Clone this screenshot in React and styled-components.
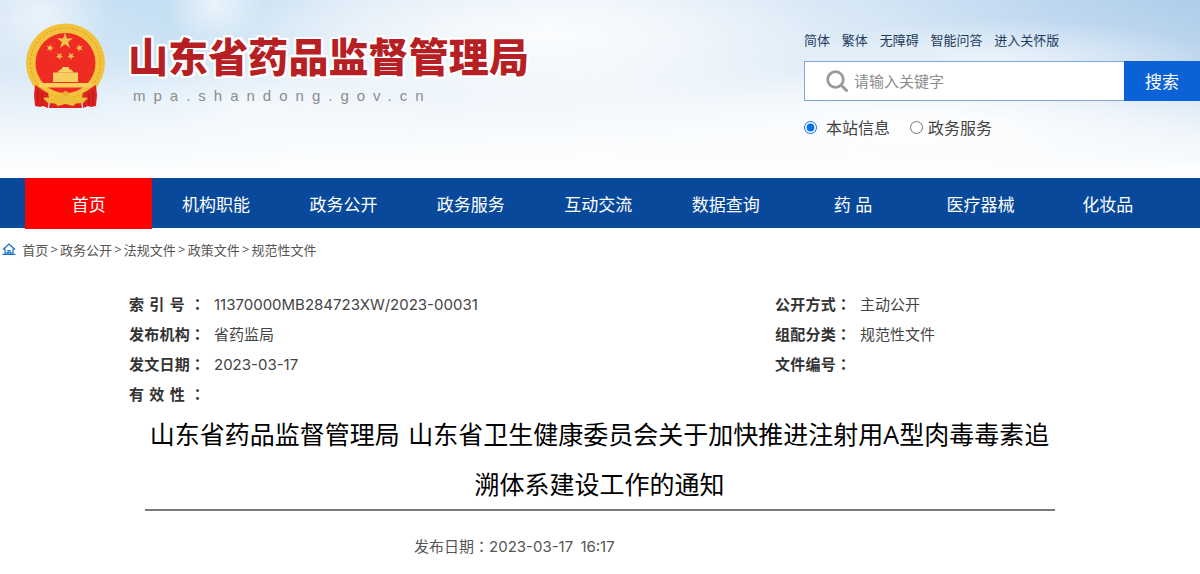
import React from 'react';
import styled, {createGlobalStyle} from 'styled-components';

const CJK = `"Open Sans", "Noto Sans CJK SC", sans-serif`;

const GlobalStyle = createGlobalStyle`
    html, body {
        margin: 0;
        padding: 0;
        background: #fff;
        font-family: ${CJK};
    }
`;

const Page = styled.div`
    width: 1200px;
    height: 574px;
    overflow: hidden;
`;

const Header = styled.header`
    height: 178px;
    display: flex;
    justify-content: space-between;
    background:
        radial-gradient(ellipse 70px 60px at 40px 15px, rgba(255,255,255,0.6), rgba(255,255,255,0) 100%),
        radial-gradient(ellipse 50px 40px at 215px 5px, rgba(255,255,255,0.6), rgba(255,255,255,0) 100%),
        radial-gradient(ellipse 340px 60px at 930px 125px, rgba(255,255,255,0.95), rgba(255,255,255,0) 100%),
        radial-gradient(ellipse 300px 75px at 540px 35px, rgba(255,255,255,0.85), rgba(255,255,255,0) 100%),
        radial-gradient(ellipse 220px 40px at 1000px 60px, rgba(255,255,255,0.6), rgba(255,255,255,0) 100%),
        radial-gradient(ellipse 200px 60px at 250px 110px, rgba(255,255,255,0.5), rgba(255,255,255,0) 100%),
        linear-gradient(to bottom, rgba(255,255,255,0) 0%, rgba(255,255,255,0.2) 35%, rgba(255,255,255,0.8) 78%, #fff 100%),
        linear-gradient(to right, #cfe3f4 0%, #c3def3 14%, #dbeaf6 30%, #e6f0f9 50%, #d5e6f5 72%, #bcd6ef 88%, #aecdea 100%);
`;

const Brand = styled.div`
    display: flex;
    align-items: flex-start;
    padding: 23px 0 0 25px;
`;

const Emblem = styled.svg`
    width: 82px;
    height: 86px;
    flex: none;
`;

const BrandText = styled.div`
    margin: 8px 0 0 21px;
`;

const SiteName = styled.div`
    font-family: "Noto Sans CJK SC", sans-serif;
    font-size: 40px;
    line-height: 48px;
    letter-spacing: 0.1px;
    font-weight: 900;
    color: #b61f24;
    white-space: nowrap;
    text-shadow: 2px 0 0 #fff, -2px 0 0 #fff, 0 2px 0 #fff, 0 -2px 0 #fff,
        2px 2px 0 #fff, -2px 2px 0 #fff, 2px -2px 0 #fff, -2px -2px 0 #fff;
`;

const SiteUrl = styled.div`
    margin: 8px 0 0 5px;
    font-family: "Liberation Sans", sans-serif;
    font-size: 15px;
    line-height: 18px;
    letter-spacing: 8px;
    color: #8a8c8e;
    white-space: nowrap;
`;

const Tools = styled.div`
    width: 396px;
    padding-top: 32px;
`;

const TopLinks = styled.div`
    display: flex;
    gap: 11.8px;
    font-size: 13px;
    line-height: 17px;
    color: #1f3b5c;
`;

const SearchBar = styled.div`
    display: flex;
    height: 40px;
    margin-top: 12px;
`;

const SearchField = styled.div`
    width: 320px;
    box-sizing: border-box;
    display: flex;
    align-items: center;
    gap: 6px;
    padding-left: 21px;
    background: #fff;
    border: 1px solid #7fa7dc;
    border-right: none;
    color: #8c8c8c;
    font-size: 15px;
`;

const Placeholder = styled.span`
    margin-bottom: 2px;
`;

const SearchButton = styled.div`
    flex: 1;
    display: flex;
    align-items: center;
    justify-content: center;
    padding-bottom: 2px;
    background: #0b62d6;
    color: #fff;
    font-size: 17px;
`;

const Scopes = styled.div`
    display: flex;
    align-items: center;
    margin-top: 16px;
    height: 20px;
    font-size: 16px;
    color: #444;
`;

const Scope = styled.label`
    display: flex;
    align-items: center;
    gap: ${p => p.$gap}px;
    margin-right: 20px;
`;

const Radio = styled.input`
    width: 13px;
    height: 13px;
    margin: 0;
    accent-color: #0b6ff0;
`;

const Nav = styled.nav`
    display: flex;
    height: 50px;
    padding-left: 25px;
    background: #09499c;
`;

const NavItem = styled.div`
    width: 127.4px;
    height: ${p => (p.$active ? 51 : 50)}px;
    display: flex;
    align-items: center;
    justify-content: center;
    color: #fff;
    font-size: 17px;
    background: ${p => (p.$active ? '#ff0000' : 'transparent')};
`;

const Crumbs = styled.div`
    display: flex;
    align-items: center;
    gap: 2.2px;
    height: 20px;
    margin-top: 11px;
    padding-left: 2px;
    font-size: 13px;
    color: #555;
`;

const HomeIcon = styled.svg`
    width: 14px;
    height: 12px;
    margin-right: 4px;
`;

const Article = styled.main`
    width: 910px;
    margin: 0 auto;
`;

const MetaGrid = styled.div`
    display: grid;
    grid-template-columns: 646px 1fr;
    margin: 30px 0 0 -16px;
    width: 926px;
`;

const MetaRow = styled.div`
    display: flex;
    height: 30px;
    align-items: center;
    font-size: 15px;
    font-family: Inter, "Noto Sans CJK SC", sans-serif;
    color: #444;
`;

const MetaLabel = styled.b`
    width: 76px;
    margin: 0 9px 2px 0;
    flex: none;
    font-weight: 700;
    color: #333;
    font-family: "Noto Sans CJK SC", sans-serif;
    text-align: justify;
    text-align-last: justify;
`;

const MetaValue = styled.span`
    margin-bottom: ${p => (p.$cjk ? 2 : 0)}px;
`;

// the reference's full-width colon sits in the middle of its cell, as in the TC cut
const Colon = styled.span`
    font-family: "Noto Sans CJK TC", sans-serif;
`;

const Title = styled.h1`
    margin: 0;
    padding-right: 1px;
    font-size: 25px;
    line-height: 50px;
    font-weight: 400;
    word-spacing: 2px;
    color: #000;
    text-align: center;
    border-bottom: 2px solid #777;
`;

const PublishDate = styled.div`
    margin: 25px 0 0 269px;
    font-size: 15px;
    line-height: 20px;
    word-spacing: 3px;
    font-family: Inter, "Noto Sans CJK SC", sans-serif;
    color: #555;
`;

const NAV_ITEMS = ['首页', '机构职能', '政务公开', '政务服务', '互动交流', '数据查询', '药 品', '医疗器械', '化妆品'];

const META = [
    ['索 引 号 ', '11370000MB284723XW/2023-00031'],
    ['公开方式', '主动公开', true],
    ['发布机构', '省药监局', true],
    ['组配分类', '规范性文件', true],
    ['发文日期', '2023-03-17'],
    ['文件编号', ''],
    ['有 效 性 ', ''],
];

const Star = ({x, y, r, rot = 0}) => {
    const points = [];
    for (let i = 0; i < 10; i++) {
        const radius = i % 2 ? r * 0.38 : r;
        const a = (Math.PI / 5) * i - Math.PI / 2 + rot;
        points.push(`${(x + radius * Math.cos(a)).toFixed(2)},${(y + radius * Math.sin(a)).toFixed(2)}`);
    }
    return <polygon points={points.join(' ')} fill="#f3c24a"/>;
};

const NationalEmblem = () => (
    <Emblem viewBox="25 23 82 86">
        <circle cx="65.5" cy="63" r="39.5" fill="#f2c23c"/>
        <circle cx="65.5" cy="63" r="35" fill="none" stroke="#e2a82a" strokeWidth="1.2" strokeDasharray="2.500 2"/>
        <circle cx="65.5" cy="63" r="30" fill="#ee2c24"/>
        <Star x={65} y={41} r={8.5}/>
        <Star x={50} y={48} r={4} rot={0.3}/>
        <Star x={79.5} y={48} r={4} rot={-0.3}/>
        <Star x={59.5} y={56} r={4} rot={0.6}/>
        <Star x={71} y={56} r={4} rot={-0.6}/>
        <path d="M57 72.500l3-3h1.500l1-2.500h6l1 2.500h1.500l3 3z" fill="#f7d566"/>
        <path d="M53 72.500h25V82H53z" fill="#f7cf5e"/>
        <path d="M38 83h55c-0.500 2-1 3-2 4.500H40c-1-1.500-1.500-2.500-2-4.500z" fill="#f7d05c"/>
        <path d="M35 85c4 2 8 6 13 8l1 5-1 10-5-2-3 1-5-1-1-11z" fill="#dd2220"/>
        <path d="M96 85c-4 2-8 6-13 8l-1 5 1 10 5-2 3 1 5-1 1-11z" fill="#dd2220"/>
        <path d="M38 90v15M42 93v13M93 90v15M89 93v13" stroke="#a81414" strokeWidth="0.800" fill="none"/>
        <path d="M50 102h31l1 6H49z" fill="#dd2220"/>
        <path d="M43 98c5-1 12 0 15 2 1-4 3-7 7.500-7s6.500 3 7.500 7c3-2 10-3 15-2l-5 5-7 0.500-3 2.500-7.500-2-7.500 2-3-2.500-7-0.500z" fill="#f0bd3a"/>
        <circle cx="65.500" cy="93.500" r="2.500" fill="#e8ac2e"/>
    </Emblem>
);

const App = () => {
    return (
        <Page>
            <GlobalStyle/>
            <Header>
                <Brand>
                    <NationalEmblem/>
                    <BrandText>
                        <SiteName>山东省药品监督管理局</SiteName>
                        <SiteUrl>mpa.shandong.gov.cn</SiteUrl>
                    </BrandText>
                </Brand>
                <Tools>
                    <TopLinks>
                        <span>简体</span>
                        <span>繁体</span>
                        <span>无障碍</span>
                        <span>智能问答</span>
                        <span>进入关怀版</span>
                    </TopLinks>
                    <SearchBar>
                        <SearchField>
                            <svg width="22" height="22" viewBox="0 0 22 22" fill="none" stroke="#9a9a9a">
                                <circle cx="9.500" cy="9.500" r="7.800" strokeWidth="2.800"/>
                                <path d="M15.500 15.500L20.500 20.500" strokeWidth="3" strokeLinecap="round"/>
                            </svg>
                            <Placeholder>请输入关键字</Placeholder>
                        </SearchField>
                        <SearchButton>搜索</SearchButton>
                    </SearchBar>
                    <Scopes>
                        <Scope $gap={9}>
                            <Radio type="radio" name="scope" defaultChecked/>
                            本站信息
                        </Scope>
                        <Scope $gap={5}>
                            <Radio type="radio" name="scope"/>
                            政务服务
                        </Scope>
                    </Scopes>
                </Tools>
            </Header>
            <Nav>
                {NAV_ITEMS.map((item, i) => (
                    <NavItem key={item} $active={i === 0}>{item}</NavItem>
                ))}
            </Nav>
            <Crumbs>
                <HomeIcon viewBox="0 0 14 12" fill="none" stroke="#1a6fc4" strokeWidth="1.200">
                    <path d="M1 6.500L7 1l6 5.500M3 5.500V10h8V5.500M6 10V7.500h2V10M0.500 11.400h13"/>
                </HomeIcon>
                <span>首页</span><span>&gt;</span>
                <span>政务公开</span><span>&gt;</span>
                <span>法规文件</span><span>&gt;</span>
                <span>政策文件</span><span>&gt;</span>
                <span>规范性文件</span>
            </Crumbs>
            <Article>
                <MetaGrid>
                    {META.map(([label, value, cjk]) => (
                        <MetaRow key={label}>
                            <MetaLabel>{label}<Colon>：</Colon></MetaLabel>
                            <MetaValue $cjk={cjk}>{value}</MetaValue>
                        </MetaRow>
                    ))}
                </MetaGrid>
                <Title>
                    山东省药品监督管理局 山东省卫生健康委员会关于加快推进注射用A型肉毒毒素追溯体系建设工作的通知
                </Title>
                <PublishDate>发布日期<Colon>：</Colon>2023-03-17 16:17</PublishDate>
            </Article>
        </Page>
    );
};

export default App;
